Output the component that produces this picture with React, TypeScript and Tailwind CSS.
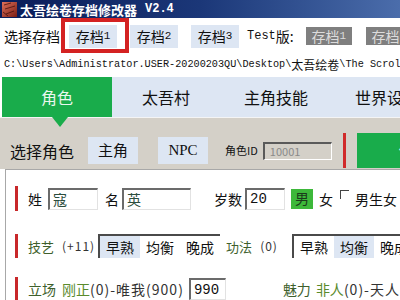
import type { ReactNode } from "react";

const mono = "font-['Liberation_Mono',monospace]";

function AppIcon() {
  return (
    <svg width="15" height="15" viewBox="0 0 15 15">
      <defs>
        <linearGradient id="ic" x1="0" y1="0" x2="1" y2="1">
          <stop offset="0" stopColor="#e0705a" />
          <stop offset="1" stopColor="#7a1d14" />
        </linearGradient>
      </defs>
      <rect x="0" y="0" width="15" height="15" fill="url(#ic)" />
      <path d="M2 3 L9 1 M3 7 L13 4 M4 12 L12 9 M1 10 L6 14" stroke="#3a0b08" strokeWidth="1" opacity="0.7" />
    </svg>
  );
}

function SaveBtn({ n, className }: { n: number; className: string }) {
  return (
    <div className={`h-[23px] w-[48px] bg-[#dde6f3] flex items-center justify-center text-[14px] leading-none ${className}`}>
      存档<span className={`${mono} text-[11px]`}>{n}</span>
    </div>
  );
}

function TestBtn({ n, className }: { n: number; className: string }) {
  return (
    <div className={`h-[18px] w-[46px] bg-[#7f7f7f] text-[#dcdcdc] flex items-center justify-center text-[14px] leading-none ${className}`}>
      存档<span className={`${mono} text-[11px]`}>{n}</span>
    </div>
  );
}

function Field({ className, children }: { className: string; children?: ReactNode }) {
  return (
    <div
      className={`h-[22px] bg-white border-t-2 border-l-2 border-t-[#6b6b6b] border-l-[#6b6b6b] border-b border-r border-b-[#e2e2e2] border-r-[#e2e2e2] flex items-center pl-[3px] text-[14px] leading-none ${className}`}
    >
      {children}
    </div>
  );
}

function Choice({ active, className }: { active: number; className: string }) {
  const items = ["早熟", "均衡", "晚成"];
  return (
    <div className={`h-[24px] flex border-t-2 border-l-2 border-[#4a4a4a] bg-white ${className}`}>
      {items.map((t, i) => (
        <div
          key={t}
          className={`w-[40px] shrink-0 flex items-center justify-center text-[14px] leading-none ${i === active ? "bg-[#dde6f3]" : ""}`}
        >
          {t}
        </div>
      ))}
    </div>
  );
}

function Row({ className, children }: { className: string; children: ReactNode }) {
  return (
    <div className={`h-[24px] flex items-center *:shrink-0 ${className}`}>
      <div className="ml-[9px] w-[3px] self-stretch bg-[#c8282a]" />
      {children}
    </div>
  );
}

export default function App() {
  return (
    <div className="relative w-[400px] h-[300px] overflow-hidden bg-white text-[#111] whitespace-nowrap font-['Noto_Sans_CJK_SC',sans-serif]">
      {/* title bar */}
      <div className="h-[18px] flex items-center *:shrink-0 pl-[2px] bg-linear-to-r from-[#0a1c58] via-[#1b3778] to-[#4b6dab]">
        <AppIcon />
        <span className="ml-[3px] text-[13px] font-bold text-white leading-none">太吾绘卷存档修改器</span>
        <span className={`ml-[8px] text-[12px] font-bold text-white leading-none ${mono}`}>V2.4</span>
      </div>

      {/* save selector */}
      <div className="h-[36px] flex items-center *:shrink-0">
        <span className="ml-[4px] text-[14px] leading-none">选择存档</span>
        <SaveBtn n={1} className="ml-[9px]" />
        <SaveBtn n={2} className="ml-[13px]" />
        <SaveBtn n={3} className="ml-[13px]" />
        <span className={`ml-[8px] text-[12px] leading-none ${mono}`}>Test</span>
        <span className="text-[14px] leading-none">版:</span>
        <TestBtn n={1} className="ml-[12px]" />
        <TestBtn n={2} className="ml-[14px]" />
      </div>
      <div className="absolute left-[61px] top-[18px] w-[68px] h-[35px] border-[4px] border-[#d42222]" />

      {/* path */}
      <div className={`h-[22px] flex items-center pl-[4px] text-[10.2px] leading-none ${mono}`}>
        C:\Users\Administrator.USER-20200203QU\Desktop\
        <span className="text-[12px] font-['Noto_Sans_CJK_SC',sans-serif]">太吾绘卷</span>
        \The Scroll Of Taiwu
      </div>

      {/* tabs */}
      <div className="mt-[1px] h-[40px] flex *:shrink-0 pl-[2px]">
        <div className="w-[110px] bg-[#19ac4b] text-[#eaf7ee] flex items-center justify-center text-[16px]">角色</div>
        <div className="flex w-[330px] bg-[#dde6f3] *:shrink-0">
          <div className="w-[108px] flex items-center justify-center text-[16px]">太吾村</div>
          <div className="w-[112px] flex items-center justify-center text-[16px]">主角技能</div>
          <div className="w-[110px] flex items-center justify-center text-[16px]">世界设定</div>
        </div>
      </div>
      <div className="h-[1px] bg-[#f4f4f4]" />

      {/* role selector */}
      <div className="relative bg-[#d4d0c8] pt-[15px] pb-[1px]">
        <div className="absolute left-[52px] top-[-1px] w-0 h-0 border-l-[8px] border-r-[8px] border-t-[10px] border-l-transparent border-r-transparent border-t-[#19ac4b]" />
        <div className="h-[35px] flex items-center *:shrink-0">
          <span className="ml-[10px] text-[16px] leading-none">选择角色</span>
          <div className="ml-[14px] w-[50px] h-[27px] bg-[#dde6f3] flex items-center justify-center text-[15px]">主角</div>
          <div className="ml-[20px] w-[50px] h-[27px] bg-[#dde6f3] flex items-center justify-center text-[15px] font-['Liberation_Serif',serif]">NPC</div>
          <span className="ml-[17px] text-[11px] leading-none">角色ID</span>
          <div className="ml-[5px] w-[69px] h-[18px] border-t-2 border-l-2 border-t-[#5a5a5a] border-l-[#5a5a5a] border-b border-r border-b-white border-r-white flex items-center pl-[5px] text-[11px] text-[#8a8a8a] leading-none">
            10001
          </div>
          <div className="ml-[11px] w-[3px] h-[35px] bg-[#d02a2a]" />
          <div className="ml-[11px] w-[60px] h-[35px] bg-[#19ac4b] flex items-center pl-[42px] text-[15px] text-[#e8f6ec]">
            保存
          </div>
        </div>
      </div>

      {/* editor panel */}
      <div className="ml-[5px] h-[200px] border-t border-l border-[#a8a8a8] bg-white pt-[16px]">
        <Row className="h-[25px]">
          <span className="ml-[10px] text-[14px] leading-none">姓</span>
          <Field className="ml-[6px] w-[50px] text-[#2b4d3d]">寇</Field>
          <span className="ml-[7px] text-[14px] leading-none">名</span>
          <Field className="ml-[3px] w-[69px] text-[#2b4d3d]">英</Field>
          <span className="ml-[23px] text-[14px] leading-none">岁数</span>
          <Field className={`ml-[3px] w-[40px] text-[12px] ${mono}`}>20</Field>
          <div className="ml-[6px] w-[22px] h-[20px] bg-[#3db83a] flex items-center justify-center text-[14px] text-[#1b3b1b]">男</div>
          <span className="ml-[6px] text-[14px] leading-none">女</span>
          <div className="ml-[7px] mb-[8px] w-[9px] h-[9px] border-t border-l border-[#444]" />
          <span className="ml-[6px] text-[14px] leading-none">男生女</span>
        </Row>

        <Row className="mt-[23px]">
          <span className="ml-[10px] text-[13px] leading-none text-[#3e5f2c]">技艺</span>
          <span className="ml-[8px] text-[12px] leading-none text-[#333] tracking-[1px]">(+11)</span>
          <Choice active={0} className="ml-[3px] w-[122px]" />
          <span className="ml-[6px] text-[13px] leading-none text-[#3e5f2c]">功法</span>
          <span className="ml-[8px] text-[12px] leading-none text-[#333] tracking-[1px]">(0)</span>
          <Choice active={1} className="ml-[14px] w-[130px]" />
        </Row>

        <Row className="mt-[19px]">
          <span className="ml-[10px] text-[14px] leading-none text-[#3e5f2c]">立场</span>
          <span className="ml-[6px] text-[14px] leading-none text-[#5a8a2c]">刚正</span>
          <span className="text-[14px] leading-none text-[#333] tracking-[1px]">(0)-唯我(900)</span>
          <Field className={`ml-[5px] w-[37px] text-[12px] ${mono}`}>990</Field>
          <span className="ml-[57px] text-[14px] leading-none text-[#3e5f2c]">魅力</span>
          <span className="ml-[5px] text-[14px] leading-none text-[#5a8a2c]">非人</span>
          <span className="text-[14px] leading-none text-[#333] tracking-[1px]">(0)-天人(900)</span>
        </Row>
      </div>
    </div>
  );
}
